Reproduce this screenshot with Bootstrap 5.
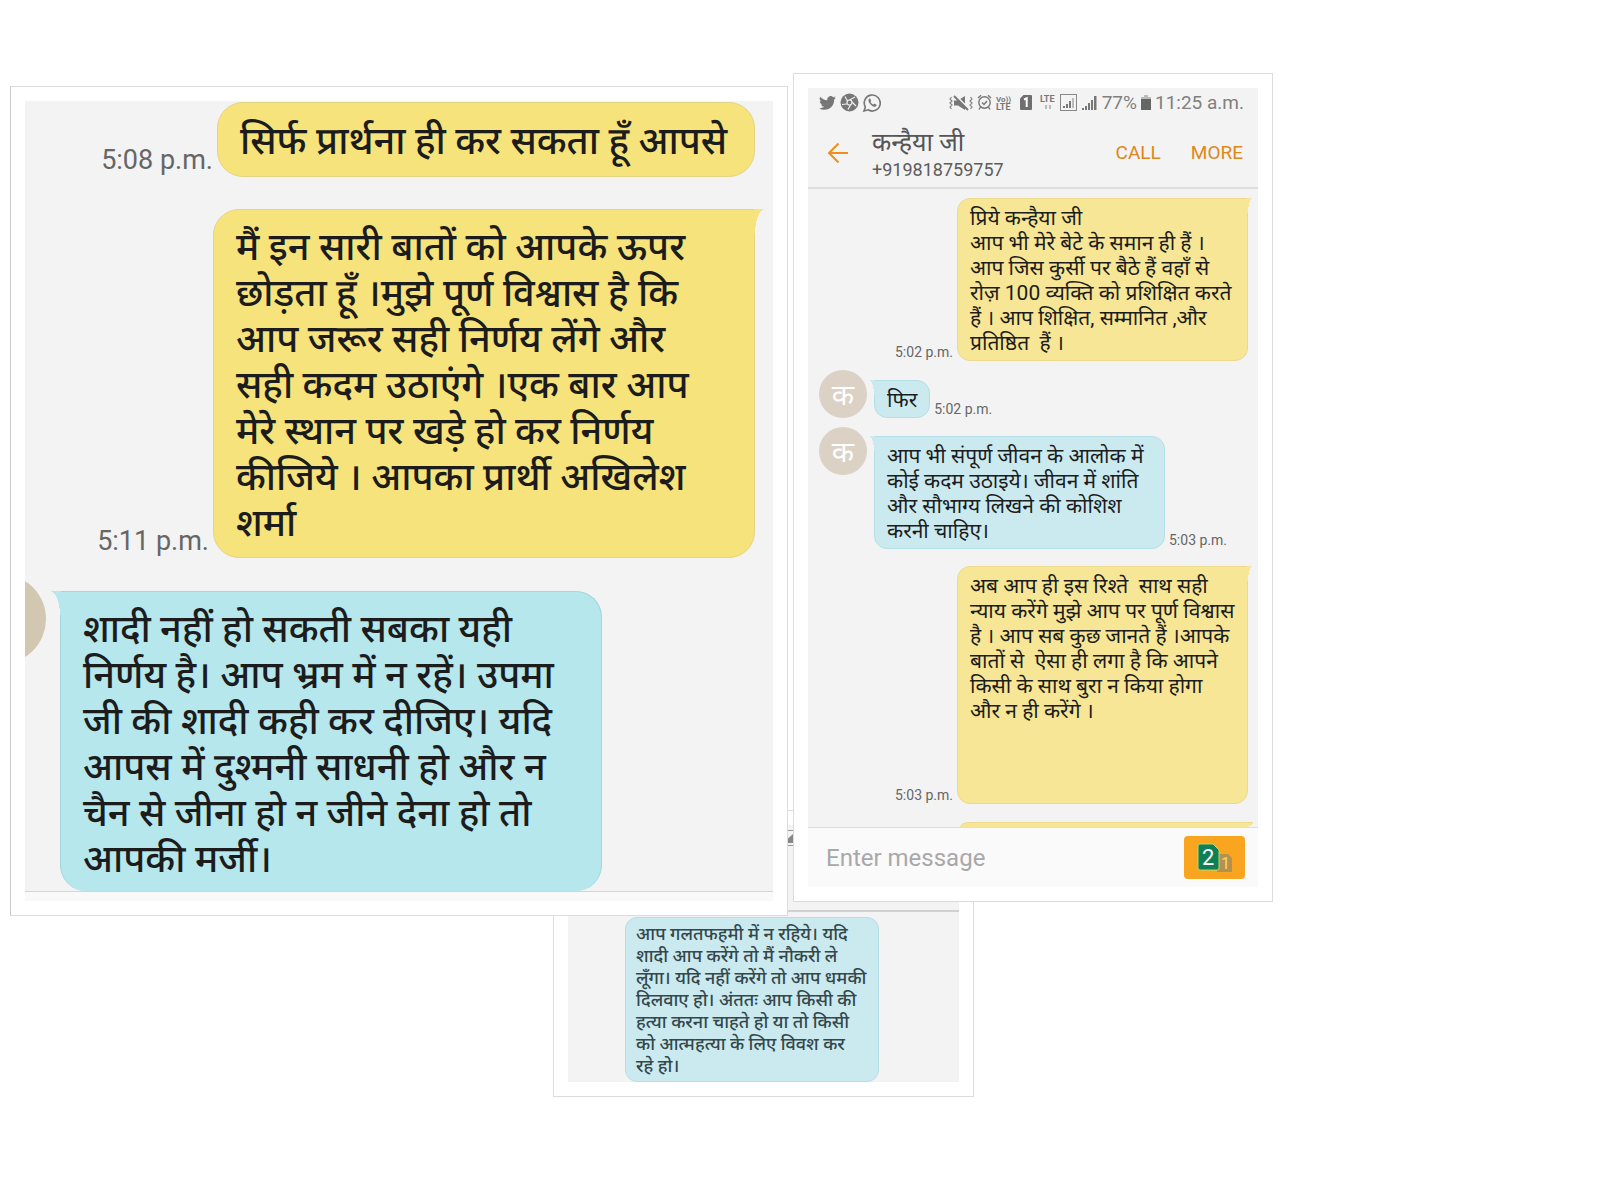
<!DOCTYPE html>
<html lang="hi">
<head>
<meta charset="utf-8">
<meta name="viewport" content="width=device-width, initial-scale=1">
<title>Messages</title>
<link href="https://cdn.jsdelivr.net/npm/bootstrap@5.3.0/dist/css/bootstrap.min.css" rel="stylesheet">
<style>
body{background:#fff;color:#1c1c1c;font-family:Roboto,"Noto Sans Devanagari","Noto Sans",sans-serif}
.collage{display:grid;grid-template-columns:778fr 480fr 312fr;column-gap:5px;padding:73px 10px 0;align-items:start}
.photo{background:#fff;border:1px solid #dcdcdc;padding:14px;min-width:0}
.photo-big{margin-top:13px;border-left-color:#c8c8c8;z-index:2}
.photo-chat{z-index:3}
.photo-low{grid-column:1 / 3;margin:-106px 0 0 43%;width:421px;z-index:1}
.screen{background:#f3f3f3;overflow:hidden}
.bub{position:relative;border:1px solid #e6d485;background:#f6e37c;white-space:nowrap}
.bub.theirs{background:#b6e7ec;border-color:#a3d5da}
.soft .bub{background:#f7e695;border-color:#ecd98c}
.soft .bub.theirs{background:#cbeaef;border-color:#b5dfe6}
.tail::after{content:"";position:absolute;top:-1px;right:-6px;width:6px;height:15px;background:radial-gradient(ellipse 5px 15px at 100% 100%,transparent 98%,#f7e695 100%)}
.tail.theirs::after{right:auto;left:-6px;background:radial-gradient(ellipse 5px 15px at 0 100%,transparent 98%,#cbeaef 100%)}
.large .tail::after{right:-11px;width:11px;height:24px;background:radial-gradient(ellipse 10px 24px at 100% 100%,transparent 98%,#f6e37c 100%)}
.large .tail.theirs::after{right:auto;left:-11px;background:radial-gradient(ellipse 10px 24px at 0 100%,transparent 98%,#b6e7ec 100%)}
.stamp{color:#666;white-space:nowrap}
.large .row-mine{padding-right:18px}
.large .bub{font-size:38px;font-weight:500;line-height:46px;border-radius:26px;padding:14px 22px 11px}
.large .theirs{padding-bottom:9px}
.large .tail{border-top-right-radius:0}
.large .tail.theirs{border-top-left-radius:0;border-top-right-radius:26px;border-bottom:0}
.large .stamp{font-size:27px;line-height:34px}
.w-big{width:542px}
.large .first{width:538px;margin-top:1px;padding:15px 22px 12px}
.second{margin-top:32px}
.third{margin-top:33px}
.third .bub{margin-left:14px}
.soft .bub{font-size:21px;line-height:25px;border-radius:13px;padding:7px 12px 4px}
.soft .stamp{font-size:14px;line-height:18px}
.soft .tail{border-top-right-radius:0}
.soft .tail.theirs{border-top-left-radius:0;border-top-right-radius:13px}
.w-mid{width:291px}
.face{width:48px;height:48px;background:#dbd1c4;color:#fff;font-size:29px;line-height:50px;text-align:center}
.face-cut{width:90px;height:90px;background:#d2c7b1;margin-left:-69px;margin-top:-17px}
.foot-line{height:10px;background:#faf9fa;border-top:1px solid #d4d4d4}
.status{color:#808080;font-size:19px;line-height:24px;padding:0 14px 3px 11px;height:32px}
.head{height:69px;border-bottom:2px solid #dcdddf;padding:0 15px 2px 19px}
.name{font-size:25px;line-height:32px;color:#555}
.phone{font-size:18px;line-height:22px;color:#5c5c5c}
.act{border:0;background:none;padding:0;color:#e0861a;font-size:19px;line-height:24px}
.who{margin-left:23px;padding-top:2px}
.more{margin-left:30px}
.thread{padding:9px 10px 0 11px}
.reply{margin-top:9px}
.reply .bub{margin-left:7px}
.soft .four{margin-top:9px}
.again{margin-top:17px}
.peek{height:5px;width:293px;margin:18px -5px 0 0;background:#f7e695;border-radius:10px 0 6px 0 / 5px 0 5px 0;border-top:1px solid #ecd98c}
.compose{background:#fafafa;border-top:1px solid #dedede;height:60px;padding:0 13px 0 18px}
.compose input{border:0;background:none;padding:0;font-size:24px;line-height:30px;color:#555;min-width:0}
.compose input::placeholder{color:#a8a8a8;opacity:1}
.compose button{border:0;padding:0;background:#f9a51f;border-radius:4px;width:61px;height:43px}
.photo-low .low{font-size:18px;font-weight:500;line-height:22px;width:254px;padding:5px 10px 4px;border-radius:12px;color:#34474b;border-color:#cbeaef;margin:5px 0 0 57px}
.low-top{height:87px;border-bottom:2px solid #d0d0d0;padding:5px 0 0 212px}
</style>
</head>
<body>
<main class="collage">
  <section class="photo photo-big large">
    <div class="screen d-flex flex-column">
      <div class="row-mine d-flex justify-content-end align-items-end">
        <span class="stamp me-1">5:08 p.m.</span>
        <div class="bub first">सिर्फ प्रार्थना ही कर सकता हूँ आपसे</div>
      </div>
      <div class="row-mine d-flex justify-content-end align-items-end second">
        <span class="stamp me-1">5:11 p.m.</span>
        <div class="bub tail w-big">मैं इन सारी बातों को आपके ऊपर<br>छोड़ता हूँ ।मुझे पूर्ण विश्वास है कि<br>आप जरूर सही निर्णय लेंगे और<br>सही कदम उठाएंगे ।एक बार आप<br>मेरे स्थान पर खड़े हो कर निर्णय<br>कीजिये । आपका प्रार्थी अखिलेश<br>शर्मा</div>
      </div>
      <div class="d-flex align-items-start third">
        <div class="face-cut rounded-circle flex-shrink-0"></div>
        <div class="bub theirs tail w-big">शादी नहीं हो सकती सबका यही<br>निर्णय है। आप भ्रम में न रहें। उपमा<br>जी की शादी कही कर दीजिए। यदि<br>आपस में दुश्मनी साधनी हो और न<br>चैन से जीना हो न जीने देना हो तो<br>आपकी मर्जी।</div>
      </div>
      <div class="foot-line"></div>
    </div>
  </section>

  <section class="photo photo-chat soft">
    <div class="screen d-flex flex-column">
      <div class="status d-flex align-items-center">
        <svg width="17" height="14" viewBox="0 0 24 20" fill="#777"><path d="M24 2.400a10 10 0 0 1-2.800.8A5 5 0 0 0 23.300.5a10 10 0 0 1-3.100 1.200A4.900 4.900 0 0 0 11.800 6.200 14 14 0 0 1 1.700 1a4.900 4.900 0 0 0 1.500 6.600A5 5 0 0 1 1 7a4.900 4.900 0 0 0 3.900 4.900 5 5 0 0 1-2.200.1 4.900 4.900 0 0 0 4.600 3.400A10 10 0 0 1 0 17.400a14 14 0 0 0 7.500 2.200c9.100 0 14.300-7.700 14-14.600A10 10 0 0 0 24 2.400z"/></svg>
        <svg class="ms-1" width="19" height="19" viewBox="0 0 19 19"><circle cx="9.500" cy="9.500" r="9" fill="#777"/><g fill="none" stroke="#f0f0f0" stroke-width="1.200"><circle cx="9.500" cy="9.500" r="2.500"/><path d="M9.500 7 15 4M12 9l4 4M10.500 12 8 16.500M7 11l-5 .5M7.500 8 5 3.500"/></g></svg>
        <svg class="ms-1" width="18" height="18" viewBox="0 0 18 18"><path d="M1 17l1.300-4A8 8 0 1 1 5 15.800z" fill="none" stroke="#777" stroke-width="1.600"/><path d="M6.300 4.600c-1.700 1.500-.4 4.300 1.500 6.100 2 1.900 4.300 2.900 5.500 1.300.5-.8.300-1.200-.2-1.500l-1.500-.8c-.7-.3-.9.7-1.500.7-.9-.2-2.300-1.500-2.500-2.400 0-.5.800-.7.500-1.400L7.300 4.900c-.2-.5-.6-.5-1-.3z" fill="#777"/></svg>
        <div class="d-flex align-items-center ms-auto">
          <svg width="24" height="16" viewBox="0 0 24 16"><path d="M5 5.500h4L16 1v14L9 10.500H5z" fill="#777"/><path d="M6 0l14 14" stroke="#f3f3f3" stroke-width="2"/><path d="M5 1l14 14" stroke="#777" stroke-width="2"/><path d="M2.500 2 1 4l2 2-2 2 2 2-2 2 1.500 2M21.500 2 23 4l-2 2 2 2-2 2 2 2-1.500 2" fill="none" stroke="#888" stroke-width="1.200"/></svg>
          <svg class="ms-1" width="15" height="17" viewBox="0 0 15 17" fill="none" stroke="#777" stroke-width="1.400"><circle cx="7.500" cy="8.500" r="5.700"/><path d="M1 4 4 1.300M14 4l-3-2.700M3.500 13 2 15.500M11.500 13l1.500 2.500M5 8.500l2 2 3-3.500"/></svg>
          <svg class="ms-1" width="16" height="16" viewBox="0 0 16 16" fill="#777" font-family="Roboto,sans-serif" font-weight="700"><text x="0" y="7" font-size="8">Vo))</text><text x="0" y="15" font-size="9">LTE</text></svg>
          <svg class="ms-2" width="12" height="15" viewBox="0 0 12 15"><path d="M3.500 0H11q1 0 1 1v13q0 1-1 1H1q-1 0-1-1V3.500z" fill="#6f6f6f"/><path d="M4 4.500 6.700 3.300V12" stroke="#fff" stroke-width="2" fill="none"/></svg>
          <svg class="ms-2" width="16" height="16" viewBox="0 0 16 16" fill="#777" font-family="Roboto,sans-serif" font-weight="700" font-size="9"><text x="0" y="7">LTE</text><path d="M5 10h2v4H5zM9 10h2v4H9z" fill="#bbb"/></svg>
          <svg class="ms-1" width="17" height="17" viewBox="0 0 17 17"><rect x=".5" y=".5" width="16" height="16" fill="none" stroke="#888"/><path d="M3 14v-2h2v2zM6 14v-4h2v4zM9 14V7h2v7z" fill="#777"/><path d="M12 14V4h2v10z" fill="#bbb"/></svg>
          <svg class="ms-1" width="17" height="16" viewBox="0 0 17 16" fill="#777"><path d="M1 15v-2h2v2zM4 15v-4h2v4zM7 15V8h2v7zM10 15V5h2v10zM13 15V1h2.500v14z"/></svg>
          <span class="ms-1">77%</span>
          <svg class="ms-1" width="10" height="15" viewBox="0 0 10 15"><path d="M3 0h4v2h3v2H0V2h3z" fill="#bbb"/><path d="M0 4h10v11H0z" fill="#666"/></svg>
          <span class="ms-1 text-nowrap">11:25 a.m.</span>
        </div>
      </div>
      <header class="head d-flex align-items-center">
        <button class="act" type="button" aria-label="Back"><svg class="d-block" width="22" height="22" viewBox="0 0 22 22" fill="none" stroke="#ec8f1c" stroke-width="2"><path d="M21 11H2M11.500 1.500 2 11l9.500 9.500"/></svg></button>
        <div class="who">
          <div class="name">कन्हैया जी</div>
          <div class="phone">+919818759757</div>
        </div>
        <button class="act ms-auto" type="button">CALL</button>
        <button class="act more" type="button">MORE</button>
      </header>
      <div class="thread d-flex flex-column">
        <div class="d-flex justify-content-end align-items-end">
          <span class="stamp me-1">5:02 p.m.</span>
          <div class="bub tail w-mid">प्रिये कन्हैया जी<br>आप भी मेरे बेटे के समान ही हैं ।<br>आप जिस कुर्सी पर बैठे हैं वहाँ से<br>रोज़ 100 व्यक्ति को प्रशिक्षित करते<br>हैं । आप शिक्षित, सम्मानित ,और<br>प्रतिष्ठित&nbsp; हैं ।</div>
        </div>
        <div class="d-flex align-items-end reply">
          <div class="face rounded-circle">क</div>
          <div class="bub theirs tail">फिर</div>
          <span class="stamp ms-1">5:02 p.m.</span>
        </div>
        <div class="d-flex align-items-end reply">
          <div class="face rounded-circle align-self-start">क</div>
          <div class="bub theirs tail w-mid four">आप भी संपूर्ण जीवन के आलोक में<br>कोई कदम उठाइये। जीवन में शांति<br>और सौभाग्य लिखने की कोशिश<br>करनी चाहिए।</div>
          <span class="stamp ms-1">5:03 p.m.</span>
        </div>
        <div class="d-flex justify-content-end align-items-end again">
          <span class="stamp me-1">5:03 p.m.</span>
          <div class="bub tail w-mid">अब आप ही इस रिश्ते&nbsp; साथ सही<br>न्याय करेंगे मुझे आप पर पूर्ण विश्वास<br>है । आप सब कुछ जानते हैं ।आपके<br>बातों से&nbsp; ऐसा ही लगा है कि आपने<br>किसी के साथ बुरा न किया होगा<br>और न ही करेंगे ।<br><br><br><br></div>
        </div>
        <div class="peek align-self-end"></div>
      </div>
      <form class="compose d-flex align-items-center">
        <input class="flex-grow-1" type="text" placeholder="Enter message" aria-label="Enter message">
        <button type="button" aria-label="Send with SIM 2"><svg class="d-block mx-auto" width="36" height="30" viewBox="0 0 36 30" font-family="Roboto,sans-serif"><path d="M23 11h8l4 4v14H20V11z" fill="#b3924f"/><text x="24" y="26" font-size="16" fill="#ffd36b">1</text><path d="M3 1h13l6 6v18q0 2-2 2H3q-2 0-2-2V3q0-2 2-2z" fill="#0f7f57" stroke="#b9d66a"/><text x="5" y="22" font-size="22" fill="#fff">2</text></svg></button>
      </form>
    </div>
  </section>

  <section class="photo photo-low soft">
    <div class="screen">
      <div class="low-top"><svg class="d-block" width="17" height="17" viewBox="0 0 17 17"><rect x=".5" y=".5" width="16" height="15" fill="none" stroke="#999"/><path d="M3 13 13 4v9z" fill="#888"/></svg></div>
      <div class="bub theirs low">आप गलतफहमी में न रहिये। यदि<br>शादी आप करेंगे तो मैं नौकरी ले<br>लूँगा। यदि नहीं करेंगे तो आप धमकी<br>दिलवाए हो। अंततः आप किसी की<br>हत्या करना चाहते हो या तो किसी<br>को आत्महत्या के लिए विवश कर<br>रहे हो।</div>
    </div>
  </section>
</main>
<script src="https://cdn.jsdelivr.net/npm/bootstrap@5.3.0/dist/js/bootstrap.bundle.min.js"></script>
</body>
</html>
